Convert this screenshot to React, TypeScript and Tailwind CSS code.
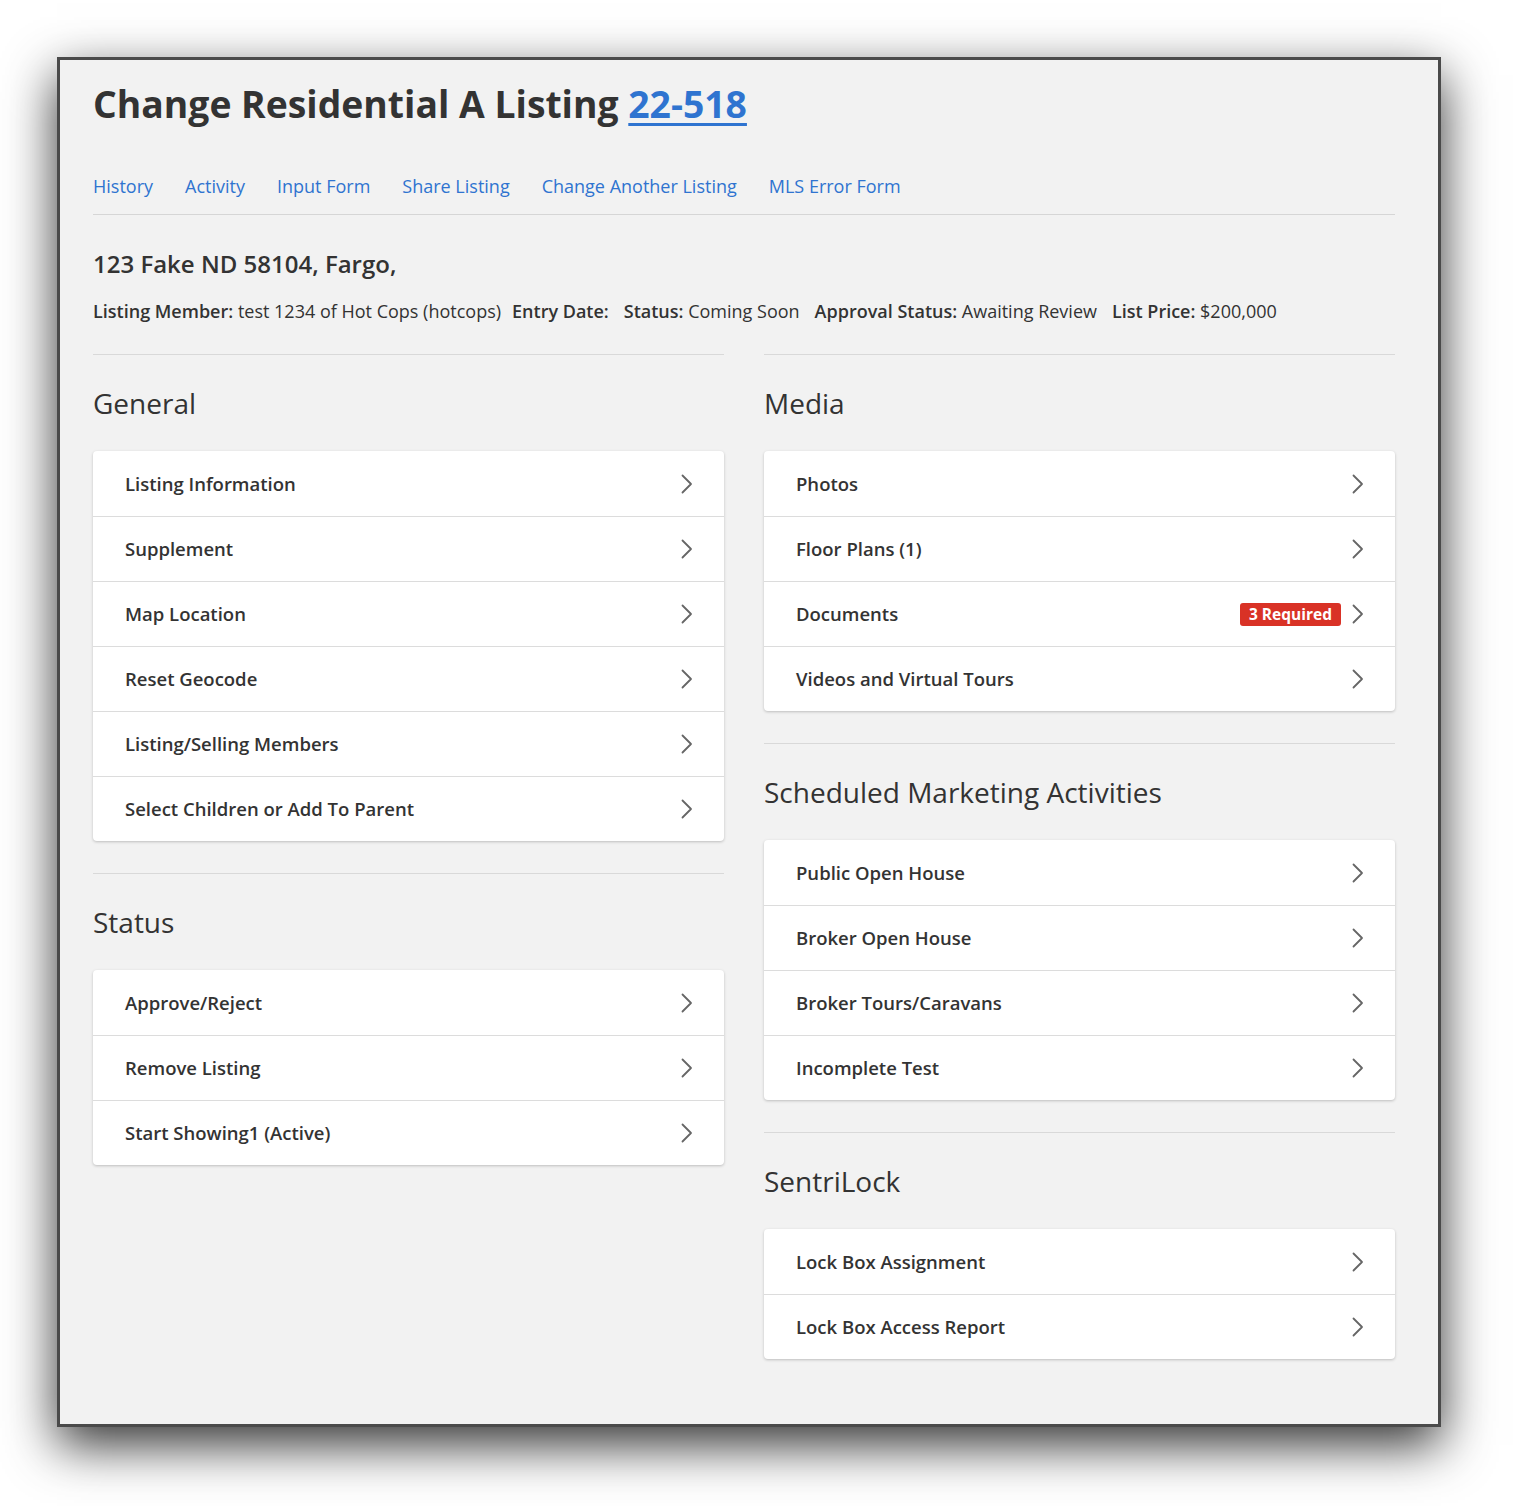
interface Row {
  label: string
  badge?: string
}

interface Section {
  title: string
  rows: Row[]
}

const navLinks = ["History", "Activity", "Input Form", "Share Listing", "Change Another Listing", "MLS Error Form"]

const leftSections: Section[] = [
  {
    title: "General",
    rows: [
      { label: "Listing Information" },
      { label: "Supplement" },
      { label: "Map Location" },
      { label: "Reset Geocode" },
      { label: "Listing/Selling Members" },
      { label: "Select Children or Add To Parent" },
    ],
  },
  {
    title: "Status",
    rows: [{ label: "Approve/Reject" }, { label: "Remove Listing" }, { label: "Start Showing1 (Active)" }],
  },
]

const rightSections: Section[] = [
  {
    title: "Media",
    rows: [
      { label: "Photos" },
      { label: "Floor Plans (1)" },
      { label: "Documents", badge: "3 Required" },
      { label: "Videos and Virtual Tours" },
    ],
  },
  {
    title: "Scheduled Marketing Activities",
    rows: [
      { label: "Public Open House" },
      { label: "Broker Open House" },
      { label: "Broker Tours/Caravans" },
      { label: "Incomplete Test" },
    ],
  },
  {
    title: "SentriLock",
    rows: [{ label: "Lock Box Assignment" }, { label: "Lock Box Access Report" }],
  },
]

function Chevron() {
  return (
    <svg width="12" height="20" viewBox="0 0 12 20" fill="none" className="shrink-0">
      <path d="M1.5 1.5 L10 10 L1.5 18.5" stroke="#666" strokeWidth="1.8" strokeLinecap="round" strokeLinejoin="round" />
    </svg>
  )
}

function SectionBlock({ section }: { section: Section }) {
  return (
    <section className="border-t border-[#d9d9d9] pb-8">
      <h2 className="pt-[30px] mb-[30px] text-[28px] leading-[36px] font-medium text-[#333]">{section.title}</h2>
      <div className="bg-white rounded-[4px] shadow-[0_1px_3px_rgba(0,0,0,0.22)]">
        {section.rows.map((row, i) => (
          <div
            key={row.label}
            className={`flex items-center h-[65px] pl-8 pr-[31px] ${i > 0 ? "border-t border-[#dcdcdc]" : ""}`}
          >
            <span className="flex-1 text-[18.5px] font-semibold text-[#333]">{row.label}</span>
            {row.badge && (
              <span className="mr-[11px] bg-[#d93226] text-white text-[15.5px] font-bold leading-[23px] px-[9px] rounded-[3px]">
                {row.badge}
              </span>
            )}
            <Chevron />
          </div>
        ))}
      </div>
    </section>
  )
}

export default function App() {
  return (
    <div className="bg-white min-h-[1506px] pt-[57px] pl-[57px] font-['Open_Sans',sans-serif] text-[#333]">
      <div className="w-[1384px] h-[1370px] bg-[#f2f2f2] border-[3px] border-[#4a4a4a] shadow-[0_18px_48px_rgba(0,0,0,0.8)] pl-[33px] pr-[43px] pt-[21px]">
        <h1 className="text-[37.3px] leading-[46px] font-bold text-[#333]">
          Change Residential A Listing{" "}
          <a className="text-[#2f74d0] underline decoration-[3px] underline-offset-[5px]">22-518</a>
        </h1>

        <nav className="flex gap-[32px] mt-[47px] pb-[16px] border-b border-[#d6d6d6]">
          {navLinks.map((l) => (
            <a key={l} className="text-[18px] leading-[24px] text-[#2f74d0]">
              {l}
            </a>
          ))}
        </nav>

        <p className="mt-[33px] text-[24px] leading-[32px] font-semibold text-[#333]">123 Fake ND 58104, Fargo,</p>

        <div className="flex gap-[11px] mt-[18px] text-[18px] leading-[26px] text-[#333]">
          <span>
            <b className="font-semibold">Listing Member:</b> test 1234 of Hot Cops (hotcops)
          </span>
          <span>
            <b className="font-semibold">Entry Date:</b>
          </span>
          <span className="ml-[4px]">
            <b className="font-semibold">Status:</b> Coming Soon
          </span>
          <span className="ml-[4px]">
            <b className="font-semibold">Approval Status:</b> Awaiting Review
          </span>
          <span className="ml-[4px]">
            <b className="font-semibold">List Price:</b> $200,000
          </span>
        </div>

        <div className="grid grid-cols-2 gap-x-10 mt-[30px]">
          <div>
            {leftSections.map((s) => (
              <SectionBlock key={s.title} section={s} />
            ))}
          </div>
          <div>
            {rightSections.map((s) => (
              <SectionBlock key={s.title} section={s} />
            ))}
          </div>
        </div>
      </div>
    </div>
  )
}
